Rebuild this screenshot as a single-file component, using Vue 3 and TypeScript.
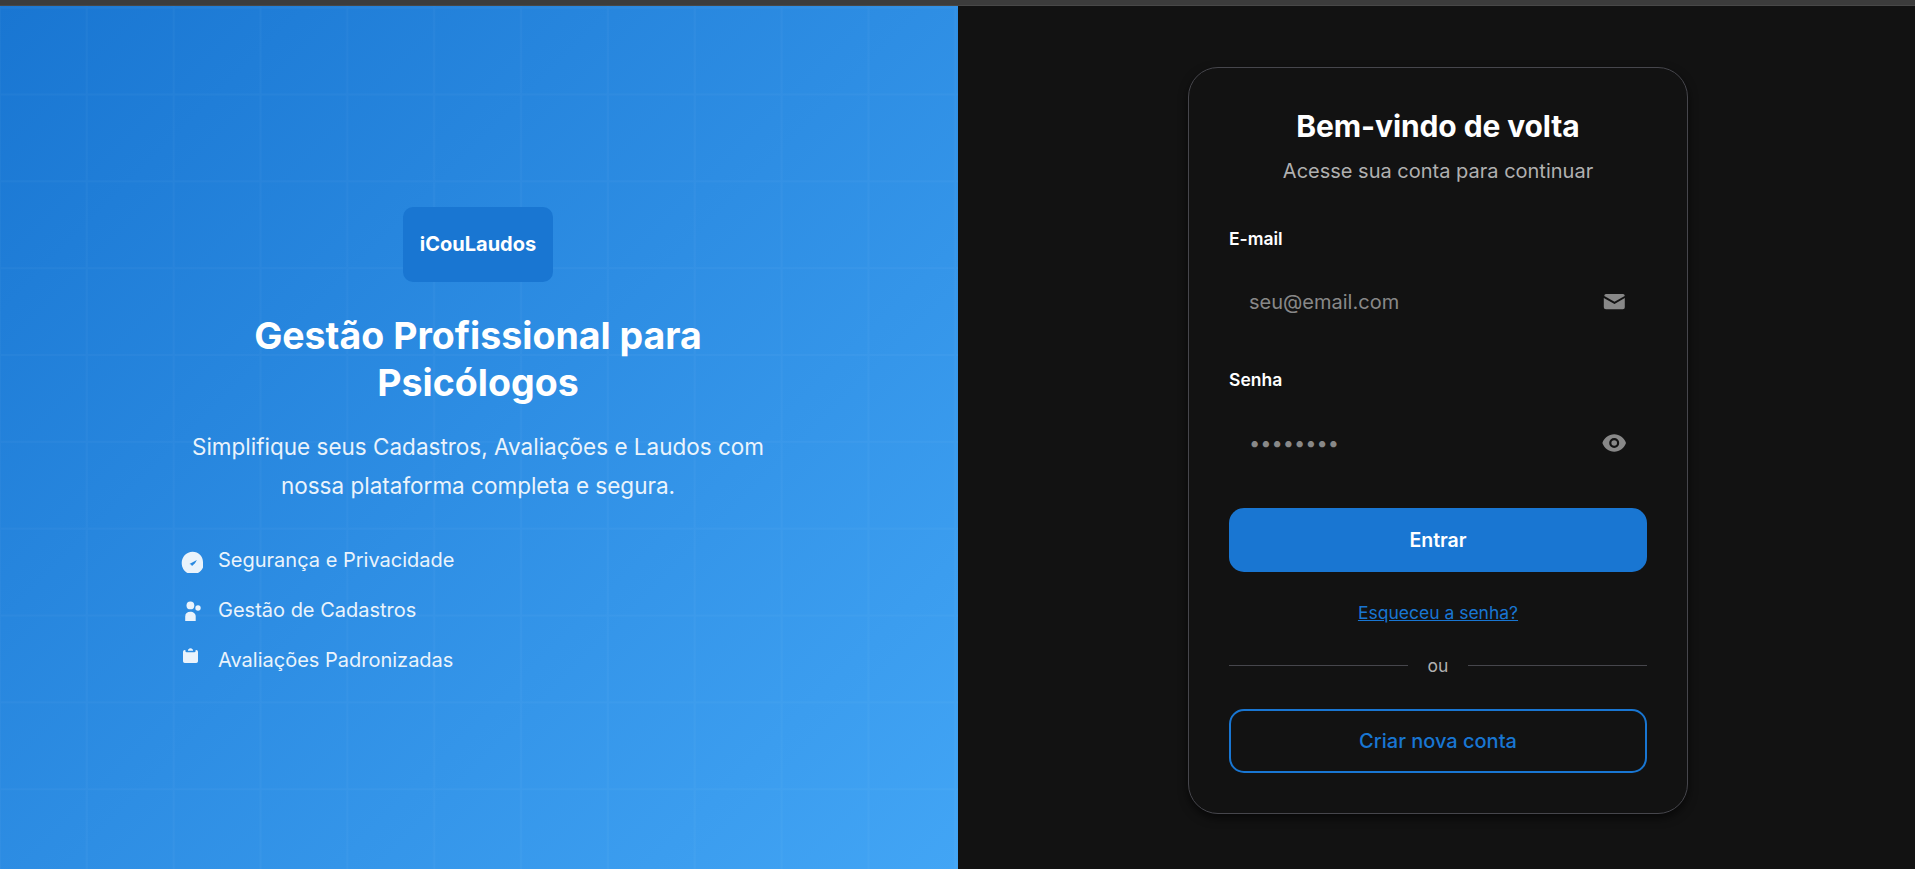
<script setup lang="ts">
import { ref } from 'vue'

const email = ref('')
const password = ref('')
const showPassword = ref(false)

const features: { icon: string; label: string }[] = [
  { icon: 'shield', label: 'Segurança e Privacidade' },
  { icon: 'people', label: 'Gestão de Cadastros' },
  { icon: 'clipboard', label: 'Avaliações Padronizadas' },
]
</script>

<template>
  <div class="page">
    <div class="topbar"></div>
    <div class="split">
      <section class="brand">
        <svg class="grid" aria-hidden="true">
          <defs>
            <pattern id="cells" y="1.6" width="86.85" height="86.85" patternUnits="userSpaceOnUse">
              <path d="M0 0H86.85V1H1V86.85H0ZM85.85 1H86.85V86.85H85.85ZM1 85.85H85.85V86.85H1Z" />
            </pattern>
          </defs>
          <rect width="100%" height="100%" fill="url(#cells)" />
        </svg>
        <div class="brand-content">
          <div class="logo">iCouLaudos</div>
          <h1>Gestão Profissional para Psicólogos</h1>
          <p class="lead">Simplifique seus Cadastros, Avaliações e Laudos com nossa plataforma completa e segura.</p>
          <ul class="features">
            <li v-for="f in features" :key="f.icon">
              <svg viewBox="0 0 24 24" aria-hidden="true">
                <path
                  v-if="f.icon === 'shield'"
                  fill-rule="evenodd"
                  d="M12.6 2.7C18.5 2.7 23 7.4 23 13V18.5C22 21 20 23 18 24H7.5C4 22.2 1.7 18.4 1.7 14C1.7 7.7 6.5 2.7 12.6 2.7ZM16.9 10.9L9.4 14.9L11 15.6L12 16.9L15 14.3Z"
                />
                <g v-else-if="f.icon === 'people'">
                  <circle cx="10.4" cy="6.4" r="3.9" />
                  <circle cx="18" cy="9" r="2.7" />
                  <path d="M5.2 22V17.4C5.2 14.4 7.3 12.8 10.3 12.8S15.7 14.6 15.7 17.4V22Z" />
                </g>
                <path
                  v-else
                  d="M3 2.8Q3 1 4.8 1H5.4V1.9Q5.4 3.2 6.8 3.2H14.2Q15.6 3.2 15.6 1.9V1H16.2Q18 1 18 2.8V12.2Q18 14 16.2 14H4.8Q3 14 3 12.2ZM8 1.8V.9Q8 .3 8.6 .3Q9.2 -.7 10.5 -.7T12.4 .3Q13 .3 13 .9V1.8Z"
                />
              </svg>
              <span>{{ f.label }}</span>
            </li>
          </ul>
        </div>
      </section>

      <section class="auth">
        <form class="card" @submit.prevent>
          <h2>Bem-vindo de volta</h2>
          <p class="subtitle">Acesse sua conta para continuar</p>

          <label for="email">E-mail</label>
          <div class="field">
            <input id="email" v-model="email" type="email" placeholder="seu@email.com" />
            <svg viewBox="0 0 26 26" aria-hidden="true">
              <path d="M3.3 6.7Q3.3 5 5 5H22Q23.7 5 23.7 6.7V7L13.5 12.7L3.3 7Z" />
              <path d="M2.8 9.1L13.5 15.1L23.8 9.1V18.2Q23.8 20.2 21.8 20.2H4.9Q2.8 20.2 2.8 18.2Z" />
            </svg>
          </div>

          <label class="next" for="password">Senha</label>
          <div class="field">
            <input id="password" v-model="password" :type="showPassword ? 'text' : 'password'" placeholder="••••••••" />
            <svg viewBox="0 0 26 26" aria-hidden="true" @click="showPassword = !showPassword">
              <path
                fill-rule="evenodd"
                d="M1.4 13C3.1 7.9 7.7 4.3 13.2 4.3S23.3 7.9 25 13C23.3 18.1 18.7 21.7 13.2 21.7S3.1 18.1 1.4 13ZM13.2 8A5 5 0 1 0 13.2 18A5 5 0 1 0 13.2 8ZM13.2 10.2A2.8 2.8 0 1 1 13.2 15.8A2.8 2.8 0 1 1 13.2 10.2Z"
              />
            </svg>
          </div>

          <button class="primary" type="submit">Entrar</button>
          <a class="forgot" href="#">Esqueceu a senha?</a>
          <div class="divider"><span>ou</span></div>
          <button class="secondary" type="button">Criar nova conta</button>
        </form>
      </section>
    </div>
  </div>
</template>

<style>
body {
  margin: 0;
  background: #121212;
}
</style>

<style scoped>
* {
  box-sizing: border-box;
}
.page {
  height: 869px;
  display: flex;
  flex-direction: column;
  overflow: hidden;
  font-family: Inter, sans-serif;
  font-size: 20px;
  color: #fff;
}
.topbar {
  height: 6px;
  flex: none;
  background: #3c3c3c;
  border-bottom: 1px solid #484848;
}
.split {
  flex: 1;
  display: grid;
  grid-template-columns: 958px 1fr;
  min-height: 0;
}
.brand {
  position: relative;
  background: linear-gradient(135deg, #1976d2 0%, #42a5f5 100%);
}
.grid {
  position: absolute;
  inset: 0;
  width: 100%;
  height: 100%;
  fill: rgba(255, 255, 255, 0.028);
}
.brand-content {
  position: relative;
  width: 600px;
  margin: 0 auto;
  padding-top: 201px;
  left: -1px;
  display: flex;
  flex-direction: column;
  align-items: center;
  text-align: center;
}
.logo {
  width: 150px;
  height: 75px;
  border-radius: 10px;
  background: #1976d2;
  display: flex;
  align-items: center;
  justify-content: center;
  padding-bottom: 1px;
  font-size: 20px;
  font-weight: 700;
}
h1 {
  margin: 30px 0 0;
  width: 500px;
  font-size: 37.5px;
  line-height: 47px;
  font-weight: 700;
}
.lead {
  margin: 21px 0 0;
  width: 600px;
  font-size: 22.5px;
  line-height: 39px;
  opacity: 0.9;
}
.features {
  align-self: flex-start;
  margin: 30px 0 0;
  padding: 0 0 0 2px;
  list-style: none;
  text-align: left;
}
.features li {
  height: 50px;
  display: flex;
  align-items: center;
  gap: 14px;
  opacity: 0.9;
}
.features svg {
  width: 24px;
  height: 24px;
  margin-top: 2px;
  fill: #fff;
  overflow: visible;
}
.auth {
  display: flex;
  justify-content: center;
  padding-top: 61px;
}
.card {
  width: 500px;
  height: 747px;
  margin-left: 3px;
  padding: 40px;
  display: flex;
  flex-direction: column;
  border: 1px solid #46464c;
  border-radius: 30px;
  background: #121212;
  box-shadow: 0 4px 10px rgba(0, 0, 0, 0.6);
}
h2 {
  margin: 0;
  text-align: center;
  font-size: 30px;
  line-height: 37px;
  font-weight: 700;
  letter-spacing: -0.1px;
}
.subtitle {
  margin: 11px 0 0;
  text-align: center;
  line-height: 30px;
  color: #b0b0b0;
}
label {
  margin-top: 40px;
  font-size: 17.5px;
  line-height: 26px;
  font-weight: 600;
}
label.next {
  margin-top: 33px;
}
.field {
  display: flex;
  align-items: center;
  height: 64px;
  margin-top: 18px;
  padding: 0 20px;
}
input {
  flex: 1;
  min-width: 0;
  padding: 0;
  border: 0;
  outline: 0;
  background: none;
  color: #fff;
  font: 20px Inter, sans-serif;
}
input::placeholder {
  color: #888;
  opacity: 1;
}
.field svg {
  width: 26px;
  height: 26px;
  fill: #888;
}
button {
  flex: none;
  height: 64px;
  border-radius: 15px;
  font: 600 19.5px Inter, sans-serif;
}
.primary {
  margin-top: 33px;
  border: 0;
  background: #1976d2;
  color: #fff;
}
.forgot {
  align-self: center;
  margin-top: 27px;
  font-size: 17.5px;
  line-height: 27px;
  color: #1976d2;
}
.divider {
  display: flex;
  align-items: center;
  gap: 20px;
  margin-top: 26px;
  font-size: 17.5px;
  line-height: 27px;
  color: #b0b0b0;
}
.divider::before,
.divider::after {
  content: '';
  flex: 1;
  height: 1px;
  background: #46464c;
}
.secondary {
  margin-top: 30px;
  border: 2px solid #1976d2;
  background: none;
  color: #1976d2;
  font-size: 20px;
  font-weight: 500;
}
</style>
